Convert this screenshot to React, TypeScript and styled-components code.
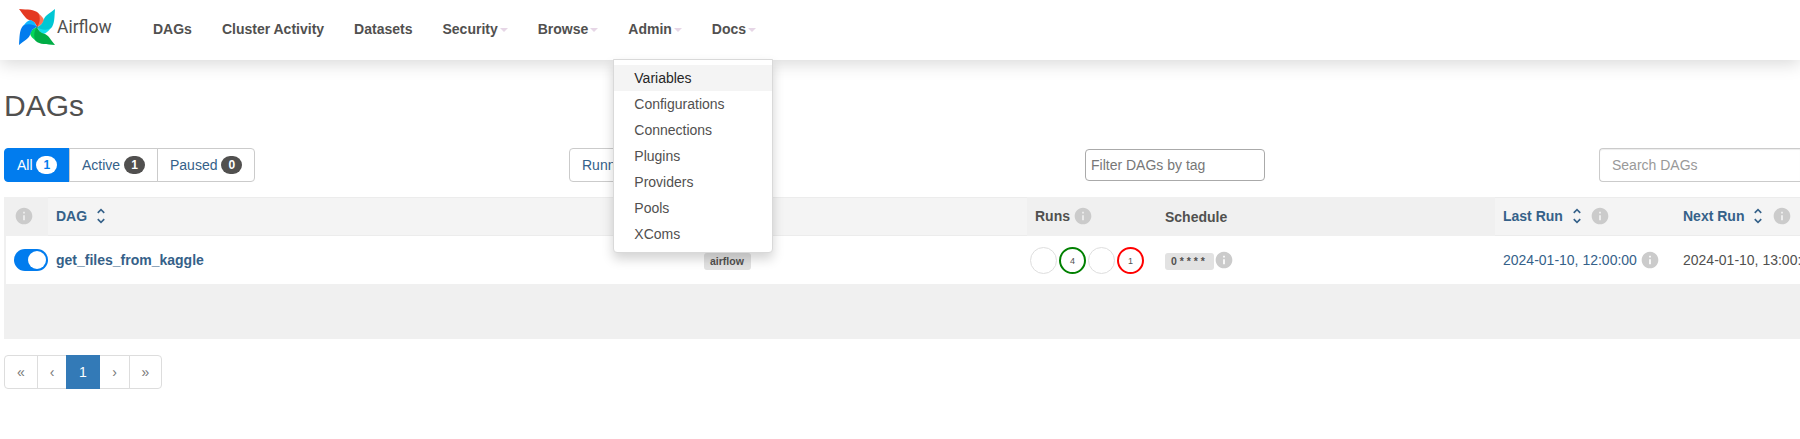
import React from "react";
import styled, { createGlobalStyle, css } from "styled-components";

const GlobalStyle = createGlobalStyle`
  * { box-sizing: border-box; }
  body {
    margin: 0;
    background: #fff;
    color: #51504f;
    font: 14px/20px "Liberation Sans", Arial, sans-serif;
    overflow: hidden;
  }
  button, input { font: inherit; }
`;

const Navbar = styled.nav`
  display: flex;
  align-items: center;
  height: 60px;
  padding-left: 19px;
  background: #fff;
  box-shadow: 0 4px 16px rgba(0, 0, 0, 0.15);
`;

const Brand = styled.a`
  display: flex;
  align-items: center;
  width: 119px;
  height: 60px;
  svg { display: block; margin-top: -6px; }
`;

const Wordmark = styled.span`
  margin: -6px 0 0 2px;
  font: 17.5px/24px Roboto, sans-serif;
`;

const NavItem = styled.div`
  position: relative;
  padding: 0 15px;
  font-weight: 700;
  line-height: 20px;
  margin-top: -2px;
  white-space: nowrap;
`;

const Caret = styled.span`
  display: inline-block;
  margin-left: 2px;
  vertical-align: middle;
  border-top: 4px solid #e6d6e6;
  border-left: 4px solid transparent;
  border-right: 4px solid transparent;
`;

const Menu = styled.div`
  position: absolute;
  z-index: 10;
  top: 40px;
  left: 0;
  width: 160px;
  padding: 5px 0;
  background: #fff;
  border: 1px solid #d9d9d9;
  border-radius: 0 0 4px 4px;
  box-shadow: 0 6px 12px rgba(0, 0, 0, 0.175);
  font-weight: 400;
`;

const MenuItem = styled.div<{ $active?: boolean }>`
  padding: 3px 20px;
  ${(p) => p.$active && css`background: #f4f4f4; color: #262626;`}
`;

const Page = styled.main`
  padding-left: 4px;
`;

const Title = styled.h1`
  margin: 29px 0 26px;
  font-size: 30px;
  font-weight: 400;
  line-height: 33px;
`;

const Filters = styled.div`
  display: flex;
  align-items: center;
  height: 34px;
`;

const FilterSlot = styled.div<{ $width: number }>`
  display: flex;
  flex: none;
  width: ${(p) => p.$width}px;
`;

const FilterButton = styled.button<{ $active?: boolean; $width?: number }>`
  height: 34px;
  width: ${(p) => (p.$width ? `${p.$width}px` : "auto")};
  padding: 0 0 0 12px;
  text-align: left;
  white-space: nowrap;
  color: ${(p) => (p.$active ? "#fff" : "#356189")};
  background: ${(p) => (p.$active ? "#017cee" : "#fff")};
  border: 1px solid ${(p) => (p.$active ? "#017cee" : "#cbcbcb")};
  & + & { margin-left: -1px; }
  &:first-child { border-top-left-radius: 4px; border-bottom-left-radius: 4px; }
  &:last-child { border-top-right-radius: 4px; border-bottom-right-radius: 4px; }
`;

const Badge = styled.span<{ $inverted?: boolean }>`
  display: inline-block;
  min-width: 21px;
  height: 18px;
  border-radius: 10px;
  font-size: 12px;
  font-weight: 700;
  line-height: 18px;
  text-align: center;
  vertical-align: middle;
  position: relative;
  top: -1px;
  color: ${(p) => (p.$inverted ? "#017cee" : "#fff")};
  background: ${(p) => (p.$inverted ? "#fff" : "#51504f")};
`;

const TagInput = styled.input`
  width: 180px;
  height: 32px;
  padding: 0 5px;
  border: 1px solid #aaa;
  border-radius: 4px;
  &::placeholder { color: #777; opacity: 1; }
`;

const SearchInput = styled.input`
  flex: 1;
  min-width: 0;
  height: 34px;
  padding: 0 12px;
  border: 1px solid #cbcbcb;
  border-right: 0;
  border-radius: 4px 0 0 4px;
  box-shadow: inset 0 1px 1px rgba(0, 0, 0, 0.075);
  &::placeholder { color: #999; opacity: 1; }
`;

const Table = styled.div`
  margin-top: 15px;
  height: 142px;
  background: #f0f0f0;
  border-radius: 4px 0 0 0;
`;

const HeaderRow = styled.div`
  display: grid;
  grid-template-columns: 44px 648px 331px 130px 338px 180px minmax(0, 1fr);
  height: 39px;
  font-weight: 700;
`;

const HeaderCell = styled.div<{ $sortable?: boolean; $low?: boolean }>`
  display: flex;
  align-items: center;
  height: 39px;
  padding: ${(p) => (p.$low ? "1px 8px 0" : "0 8px 1px")};
  border: solid ${(p) => (p.$sortable ? "#ececec" : "#f0f0f0")};
  border-width: 1px 0;
  white-space: nowrap;
  background: ${(p) => (p.$sortable ? "#f4f4f4" : "#f0f0f0")};
  color: ${(p) => (p.$sortable ? "#356189" : "#51504f")};
`;

const DataRow = styled.div`
  display: grid;
  grid-template-columns: 42px 648px 331px 130px 338px 180px minmax(0, 1fr);
  height: 48px;
  margin-left: 2px;
  background: #fff;
`;

const Cell = styled.div<{ $link?: boolean; $bold?: boolean }>`
  display: flex;
  align-items: center;
  height: 48px;
  padding: 0 0 0 8px;
  overflow: hidden;
  white-space: nowrap;
  font-weight: ${(p) => (p.$bold ? 700 : 400)};
  color: ${(p) => (p.$link ? "#356189" : "#51504f")};
`;

const ToggleCell = styled(Cell)`
  overflow: visible;
`;

const Toggle = styled.span`
  display: flex;
  justify-content: flex-end;
  flex: none;
  width: 34px;
  height: 22px;
  padding: 2px;
  border-radius: 11px;
  background: #017cee;
  &::after {
    content: "";
    width: 18px;
    height: 18px;
    border-radius: 50%;
    background: #fff;
  }
`;

const Label = styled.span<{ $width: number }>`
  display: block;
  width: ${(p) => p.$width}px;
  height: 17px;
  margin-top: 3px;
  padding-left: 6px;
  border-radius: 3px;
  background: #e2e2e2;
  font-size: 10.5px;
  font-weight: 700;
  line-height: 17px;
`;

const RunsCell = styled(Cell)`
  padding-left: 3px;
`;

const Runs = styled.div`
  display: flex;
  gap: 2px;
  margin-top: 1px;
`;

const Run = styled.span<{ $color?: string }>`
  display: flex;
  align-items: center;
  justify-content: center;
  width: 27px;
  height: 27px;
  border-radius: 50%;
  border: ${(p) => (p.$color ? `2px solid ${p.$color}` : "1px solid #dedede")};
  font-size: 9px;
  line-height: 10px;
  padding-top: 1px;
`;

const IconBox = styled.svg<{ $gap: number }>`
  flex: none;
  display: block;
  width: 20px;
  height: 20px;
  margin-left: ${(p) => p.$gap}px;
`;

const Pager = styled.div`
  display: flex;
  margin-top: 16px;
`;

const PageLink = styled.a<{ $width: number; $active?: boolean }>`
  width: ${(p) => p.$width}px;
  height: 34px;
  line-height: 32px;
  text-align: center;
  border: 1px solid ${(p) => (p.$active ? "#337ab7" : "#ddd")};
  background: ${(p) => (p.$active ? "#337ab7" : "#fff")};
  color: ${(p) => (p.$active ? "#fff" : "#777")};
  z-index: ${(p) => (p.$active ? 1 : 0)};
  & + & { margin-left: -1px; }
  &:first-child { border-radius: 4px 0 0 4px; }
  &:last-child { border-radius: 0 4px 4px 0; }
`;

const InfoIcon = ({ gap = 0 }: { gap?: number }) => (
  <IconBox $gap={gap} viewBox="0 0 24 24" fill="#cbcbcb">
    <path d="M12 2C6.48 2 2 6.48 2 12s4.48 10 10 10 10-4.48 10-10S17.52 2 12 2zm1 15h-2v-6h2v6zm0-8h-2V7h2v2z" />
  </IconBox>
);

const SortIcon = () => (
  <IconBox $gap={4} viewBox="0 0 24 24" fill="#356189">
    <path d="M12 5.83L15.17 9l1.41-1.41L12 3 7.41 7.59 8.83 9 12 5.83zm0 12.34L8.83 15l-1.41 1.41L12 21l4.59-4.59L15.17 15 12 18.17z" />
  </IconBox>
);

const blades = [
  ["#e43921", "#ff7557"],
  ["#00c7d4", "#11e1ee"],
  ["#00ad46", "#04d659"],
  ["#017cee", "#0cb6ff"],
];

const Pinwheel = () => (
  <svg width="36" height="36" viewBox="57 26 108 108">
    {blades.map(([main, light], i) => (
      <g key={main} transform={`rotate(${i * 90} 111 80)`}>
        <path fill={light} d="M115 39C125 47 130 53 132 60C130 68 122 76 111 80Z" />
        <path fill={main} d="M57 26C84 28 102 27 115 38C122 52 120 68 111 80C108 70 100 62 90 60C77 57 70 42 57 26Z" />
      </g>
    ))}
    <circle cx="111" cy="80" r="2" fill="#51504f" />
  </svg>
);

const navItems = [
  { name: "DAGs" },
  { name: "Cluster Activity" },
  { name: "Datasets" },
  { name: "Security", caret: true },
  { name: "Browse", caret: true },
  { name: "Admin", caret: true, open: true },
  { name: "Docs", caret: true },
];

const adminLinks = ["Variables", "Configurations", "Connections", "Plugins", "Providers", "Pools", "XComs"];

export default function App() {
  return (
    <>
      <GlobalStyle />
      <Navbar>
        <Brand>
          <Pinwheel />
          <Wordmark>Airflow</Wordmark>
        </Brand>
        {navItems.map((item) => (
          <NavItem key={item.name}>
            {item.name}
            {item.caret && <Caret />}
            {item.open && (
              <Menu>
                {adminLinks.map((link, i) => (
                  <MenuItem key={link} $active={i === 0}>{link}</MenuItem>
                ))}
              </Menu>
            )}
          </NavItem>
        ))}
      </Navbar>
      <Page>
        <Title>DAGs</Title>
        <Filters>
          <FilterSlot $width={565}>
            <FilterButton $active $width={66}>All <Badge $inverted>1</Badge></FilterButton>
            <FilterButton $width={89}>Active <Badge>1</Badge></FilterButton>
            <FilterButton $width={98}>Paused <Badge>0</Badge></FilterButton>
          </FilterSlot>
          <FilterSlot $width={516}>
            <FilterButton $width={92}>Running</FilterButton>
          </FilterSlot>
          <FilterSlot $width={514}>
            <TagInput placeholder="Filter DAGs by tag" />
          </FilterSlot>
          <SearchInput placeholder="Search DAGs" />
        </Filters>
        <Table>
          <HeaderRow>
            <HeaderCell><InfoIcon gap={2} /></HeaderCell>
            <HeaderCell $sortable>DAG<SortIcon /></HeaderCell>
            <HeaderCell $sortable />
            <HeaderCell>Runs<InfoIcon gap={3} /></HeaderCell>
            <HeaderCell $low>Schedule</HeaderCell>
            <HeaderCell $sortable>Last Run<SortIcon /><InfoIcon gap={3.5} /></HeaderCell>
            <HeaderCell $sortable>Next Run<SortIcon /><InfoIcon gap={3.5} /></HeaderCell>
          </HeaderRow>
          <DataRow>
            <ToggleCell><Toggle /></ToggleCell>
            <Cell $link $bold>get_files_from_kaggle</Cell>
            <Cell><Label $width={47}>airflow</Label></Cell>
            <RunsCell>
              <Runs>
                <Run />
                <Run $color="#008000">4</Run>
                <Run />
                <Run $color="#ff0000">1</Run>
              </Runs>
            </RunsCell>
            <Cell><Label $width={49}>0 * * * *</Label><InfoIcon /></Cell>
            <Cell $link>2024-01-10, 12:00:00<InfoIcon gap={3.5} /></Cell>
            <Cell>2024-01-10, 13:00:00</Cell>
          </DataRow>
        </Table>
        <Pager>
          <PageLink $width={34}>«</PageLink>
          <PageLink $width={30}>‹</PageLink>
          <PageLink $width={34} $active>1</PageLink>
          <PageLink $width={31}>›</PageLink>
          <PageLink $width={33}>»</PageLink>
        </Pager>
      </Page>
    </>
  );
}
